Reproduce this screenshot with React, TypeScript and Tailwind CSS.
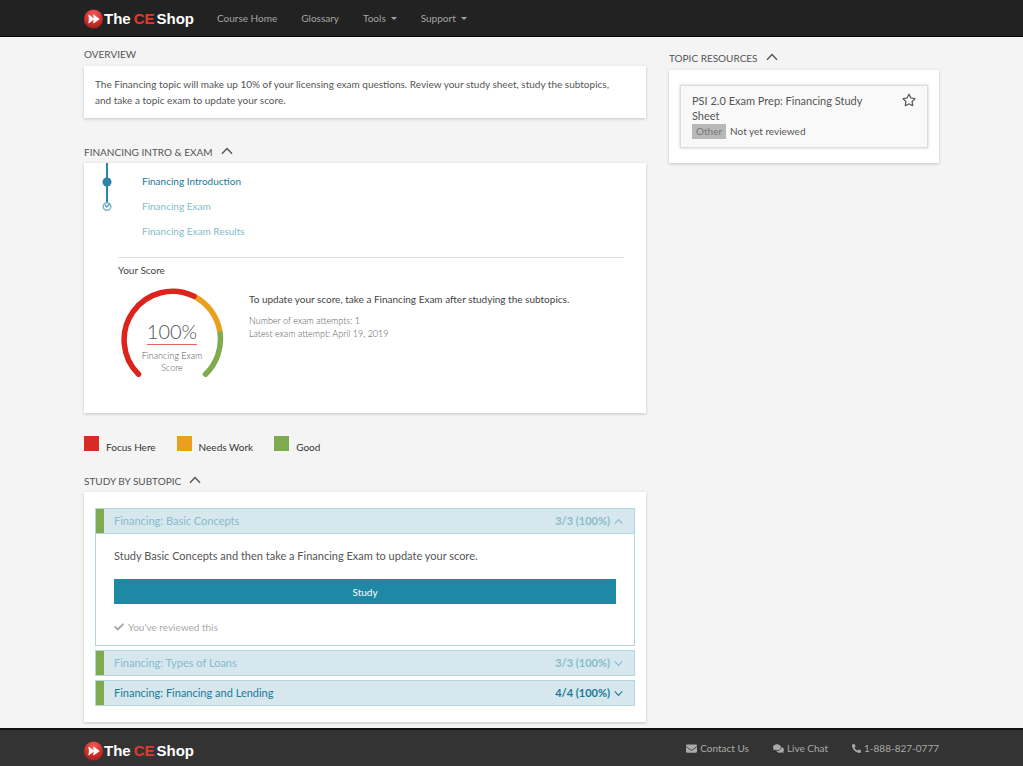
import { useState } from "react";
import type { ReactNode } from "react";
import { FaCheck, FaComments, FaEnvelope, FaPhoneAlt, FaRegStar } from "react-icons/fa";

type Subtopic = {
  title: string;
  score: string;
  reviewed: boolean;
};

const SUBTOPICS: Subtopic[] = [
  { title: "Financing: Basic Concepts", score: "3/3 (100%)", reviewed: true },
  { title: "Financing: Types of Loans", score: "3/3 (100%)", reviewed: true },
  { title: "Financing: Financing and Lending", score: "4/4 (100%)", reviewed: false },
];

const NAV_ITEMS = [
  { label: "Course Home", menu: false },
  { label: "Glossary", menu: false },
  { label: "Tools", menu: true },
  { label: "Support", menu: true },
];

const LEGEND = [
  { label: "Focus Here", swatch: "bg-[#d92b26]" },
  { label: "Needs Work", swatch: "bg-[#eb9f1e]" },
  { label: "Good", swatch: "bg-[#7fab50]" },
];

function Logo() {
  return (
    <a
      href="#home"
      aria-label="The CE Shop"
      className="flex items-center font-['Liberation_Sans',sans-serif] text-[15px] leading-5 font-bold text-white"
    >
      <svg aria-hidden viewBox="0 0 20 20" className="size-5">
        <defs>
          <radialGradient id="ball" cx="0.5" cy="0.25" r="0.75">
            <stop offset="0" stopColor="#f0605a" />
            <stop offset="0.6" stopColor="#d3302c" />
            <stop offset="1" stopColor="#a81f1c" />
          </radialGradient>
        </defs>
        <circle cx="9.5" cy="10" r="9.5" fill="url(#ball)" />
        <path
          d="M4.8 6 10 10 4.8 14 5.4 10ZM9.6 6 15.2 10 9.6 14 10.2 10Z"
          fill="#fff"
          stroke="#fff"
          strokeWidth="0.8"
        />
      </svg>
      <span>The</span>
      <span className="ml-[3px] text-[#e03a2f]">CE</span>
      <span className="ml-[2px]">Shop</span>
    </a>
  );
}

function Chevron({ up = false, className }: { up?: boolean; className: string }) {
  return (
    <svg
      aria-hidden
      viewBox="0 0 12 8"
      fill="none"
      stroke="currentColor"
      strokeWidth="1.4"
      className={className}
    >
      <path d={up ? "M1 6.8 6 1.5 11 6.8" : "M1 1.2 6 6.5 11 1.2"} />
    </svg>
  );
}

function SectionToggle({ children }: { children: ReactNode }) {
  return (
    <button type="button" className="flex items-center gap-2 uppercase">
      {children}
      <Chevron up className="mb-[3px] h-2 w-3" />
    </button>
  );
}

function ScoreGauge() {
  return (
    <div className="grid w-[104px] justify-items-center font-light">
      <svg
        aria-hidden
        viewBox="0 0 104 92"
        fill="none"
        strokeWidth="5.5"
        className="col-start-1 row-start-1 w-full"
      >
        <path d="M85.5 87.2A48.5 48.5 0 0 0 99.9 44.8" stroke="#7fab50" strokeLinecap="round" />
        <path d="M99.9 44.8A48.5 48.5 0 0 0 74 9.2" stroke="#eb9f1e" />
        <path d="M74 9.2A48.5 48.5 0 0 0 18.5 87.2" stroke="#dc231c" strokeLinecap="round" />
      </svg>
      <div className="col-start-1 row-start-1 flex flex-col items-center pt-[31px] text-center">
        <span className="border-b border-[#e8625e] text-[20px] leading-[26px]">100%</span>
        <span className="mt-[5px] w-16 text-[9px] leading-3">Financing Exam Score</span>
      </div>
    </div>
  );
}

function SubtopicRow({
  subtopic,
  open,
  onToggle,
}: {
  subtopic: Subtopic;
  open: boolean;
  onToggle: () => void;
}) {
  const tone = subtopic.reviewed ? "text-[#86bccb]" : "text-[#1c7a97]";

  return (
    <div className="border border-[#b3d6e0]">
      <button
        type="button"
        aria-expanded={open}
        onClick={onToggle}
        className={`flex h-6 w-full items-center border-l-8 border-[#7fab50] bg-[#d6e7ee] pr-[11px] pl-[10px] ${tone}`}
      >
        <span className="flex-1 text-left">{subtopic.title}</span>
        <span className="font-bold">{subtopic.score}</span>
        <Chevron up={open} className="ml-1 h-[7px] w-[9px]" />
      </button>
      {open ? (
        <div className="border-t border-[#b3d6e0] px-[18px] pt-[14px] pb-[10px]">
          <p>Study Basic Concepts and then take a Financing Exam to update your score.</p>
          <button
            type="button"
            className="mt-[15px] h-[25px] w-full bg-[#1f88a5] text-[10px] text-white"
          >
            Study
          </button>
          <p className="mt-[15px] flex items-center gap-1 text-[10px] text-[#aaaaaa]">
            <FaCheck aria-hidden className="size-[10px]" />
            You've reviewed this
          </p>
        </div>
      ) : null}
    </div>
  );
}

export default function App() {
  const [openIndex, setOpenIndex] = useState(0);

  return (
    <div className="flex min-h-screen flex-col bg-[#f4f4f4] font-[Lato,sans-serif] text-[10px] leading-4 text-[#555555]">
      <header className="border-b border-black bg-[#222222]">
        <nav className="mx-auto flex h-9 max-w-[855px] items-center text-[#a5a5a5]">
          <div className="pt-[2px]">
            <Logo />
          </div>
          <ul className="ml-[23px] flex gap-6 pb-px">
            {NAV_ITEMS.map((item) => (
              <li key={item.label}>
                <a href="#nav" className="flex items-center gap-[5px]">
                  {item.label}
                  {item.menu ? (
                    <svg aria-hidden viewBox="0 0 6 3" className="mt-[2px] w-[6px]">
                      <path d="M0 0H6L3 3Z" fill="currentColor" />
                    </svg>
                  ) : null}
                </a>
              </li>
            ))}
          </ul>
        </nav>
      </header>

      <main className="mx-auto grid w-full max-w-[855px] flex-1 grid-cols-[minmax(0,1fr)_270px] gap-[23px] pt-[7px] pb-[6px]">
        <div>
          <h2 className="leading-5 uppercase">Overview</h2>
          <p className="mt-[2px] bg-white py-[10px] pr-6 pl-[11px] shadow-[0_1px_3px_rgba(0,0,0,0.2)]">
            The Financing topic will make up 10% of your licensing exam questions. Review your
            study sheet, study the subtopics, and take a topic exam to update your score.
          </p>

          <h2 className="mt-6 leading-5">
            <SectionToggle>Financing Intro &amp; Exam</SectionToggle>
          </h2>
          <section className="mt-px bg-white pb-[34px] shadow-[0_1px_3px_rgba(0,0,0,0.2)]">
            <div className="flex pl-[17px]">
              <svg aria-hidden viewBox="0 0 12 50" fill="none" className="h-[50px] w-3">
                <path d="M6 0V40" stroke="#2b85a3" strokeWidth="2" />
                <circle cx="6" cy="19" r="4.5" fill="#2b85a3" />
                <circle cx="6" cy="43.5" r="3.8" fill="#fff" stroke="#7db6c8" strokeWidth="1.5" />
                <path d="M3.8 41.8 5.8 44 8.8 40.8" stroke="#4d9db5" strokeWidth="1.3" />
              </svg>
              <ul className="pt-[6px] pb-px pl-[29px] leading-[25px] text-[#86bccb]">
                <li>
                  <a href="#introduction" className="text-[#1c7a97]">
                    Financing Introduction
                  </a>
                </li>
                <li>
                  <a href="#exam">Financing Exam</a>
                </li>
                <li>
                  <a href="#results">Financing Exam Results</a>
                </li>
              </ul>
            </div>
            <div className="mt-3 mr-[22px] ml-[34px] border-t border-[#dddddd] pt-[2px]">
              <h3 className="leading-5 text-[#444444]">Your Score</h3>
              <div className="flex gap-[25px] pt-[7px] pl-[2px]">
                <ScoreGauge />
                <div className="pt-1 text-[9px] leading-[13px] font-light">
                  <p className="mb-[7px] text-[10px] leading-4 font-normal text-[#444444]">
                    To update your score, take a Financing Exam after studying the subtopics.
                  </p>
                  <p>Number of exam attempts: 1</p>
                  <p>Latest exam attempt: April 19, 2019</p>
                </div>
              </div>
            </div>
          </section>

          <ul className="mt-[23px] flex gap-[21px] text-[#333333]">
            {LEGEND.map((entry) => (
              <li key={entry.label} className="flex gap-[7px] leading-[22px]">
                <span className={`size-[15px] ${entry.swatch}`} />
                {entry.label}
              </li>
            ))}
          </ul>

          <h2 className="mt-[13px] leading-5">
            <SectionToggle>Study by Subtopic</SectionToggle>
          </h2>
          <section className="mt-px flex flex-col gap-1 bg-white px-[11px] py-4 text-[11px] shadow-[0_1px_3px_rgba(0,0,0,0.2)]">
            {SUBTOPICS.map((subtopic, index) => (
              <SubtopicRow
                key={subtopic.title}
                subtopic={subtopic}
                open={index === openIndex}
                onToggle={() => setOpenIndex(index === openIndex ? -1 : index)}
              />
            ))}
          </section>
        </div>

        <aside className="pt-1">
          <h2 className="leading-5">
            <SectionToggle>Topic Resources</SectionToggle>
          </h2>
          <div className="mt-[2px] bg-white px-[11px] py-[15px] shadow-[0_1px_3px_rgba(0,0,0,0.2)]">
            <article className="flex items-start justify-between border border-[#dddddd] bg-[#f9f9f9] pt-[7px] pr-[11px] pb-2 pl-[11px] leading-[15px] shadow-[0_0_3px_rgba(0,0,0,0.2)]">
              <div className="w-[180px]">
                <a href="#sheet" className="block text-[11px] leading-[15px]">
                  PSI 2.0 Exam Prep: Financing Study Sheet
                </a>
                <p className="mt-px flex gap-1">
                  <span className="bg-[#b8b8b8] px-1 text-[#777777]">Other</span>
                  Not yet reviewed
                </p>
              </div>
              <button type="button" aria-label="Add to favorites">
                <FaRegStar aria-hidden className="size-[14px]" />
              </button>
            </article>
          </div>
        </aside>
      </main>

      <footer className="border-t-2 border-[#111111] bg-[#333333]">
        <div className="mx-auto flex h-9 max-w-[855px] items-center justify-between text-[#aaaaaa]">
          <div className="pt-[6px]">
            <Logo />
          </div>
          <ul className="flex gap-6">
            <li>
              <a href="#contact" className="flex items-center gap-[3px]">
                <FaEnvelope aria-hidden className="size-[11px]" />
                Contact Us
              </a>
            </li>
            <li>
              <a href="#chat" className="flex items-center gap-[3px]">
                <FaComments aria-hidden className="size-[11px]" />
                Live Chat
              </a>
            </li>
            <li>
              <a href="#phone" className="flex items-center gap-[3px]">
                <FaPhoneAlt aria-hidden className="size-[9px]" />
                1-888-827-0777
              </a>
            </li>
          </ul>
        </div>
      </footer>
    </div>
  );
}
